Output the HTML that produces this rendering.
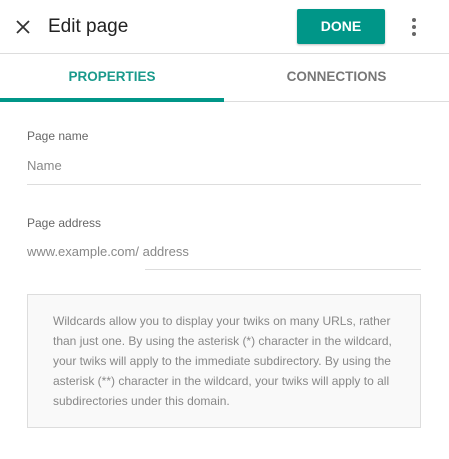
<!DOCTYPE html>
<html><head><style>
body{margin:0;width:449px;height:459px;background:#fff;font-family:"Liberation Sans",sans-serif;position:relative;overflow:hidden}
.a{position:absolute;white-space:nowrap}
</style></head><body>
<svg class="a" style="left:14px;top:18px" width="18" height="18" viewBox="0 0 18 18"><path d="M3 3L15 15M15 3L3 15" stroke="#333" stroke-width="1.8"/></svg>
<div class="a" style="left:48px;top:16px;font-size:19px;color:#222">Edit page</div>
<div class="a" style="left:297px;top:9px;width:88px;height:35px;background:#009688;border-radius:2px;box-shadow:0 1px 2px rgba(0,0,0,.25);color:#fff;font-weight:bold;font-size:14px;line-height:35px;text-align:center">DONE</div>
<div class="a" style="left:412px;top:18px;width:4px;height:4px;border-radius:2px;background:#666"></div>
<div class="a" style="left:412px;top:25px;width:4px;height:4px;border-radius:2px;background:#666"></div>
<div class="a" style="left:412px;top:32px;width:4px;height:4px;border-radius:2px;background:#666"></div>
<div class="a" style="left:0;top:53px;width:449px;height:1px;background:#ddd"></div>
<div class="a" style="left:0;top:69px;width:224px;text-align:center;font-size:13.5px;font-weight:bold;color:#1a9a8c">PROPERTIES</div>
<div class="a" style="left:224px;top:69px;width:225px;text-align:center;font-size:13.5px;font-weight:bold;color:#777">CONNECTIONS</div>
<div class="a" style="left:0;top:101px;width:449px;height:1px;background:#ddd"></div>
<div class="a" style="left:0;top:98px;width:224px;height:4px;background:#009688"></div>
<div class="a" style="left:27px;top:129px;font-size:12px;color:#666">Page name</div>
<div class="a" style="left:27px;top:158px;font-size:13px;color:#888">Name</div>
<div class="a" style="left:27px;top:184px;width:394px;height:1px;background:#ddd"></div>
<div class="a" style="left:27px;top:216px;font-size:12px;color:#666">Page address</div>
<div class="a" style="left:27px;top:244px;font-size:13px;color:#888">www.example.com/ address</div>
<div class="a" style="left:145px;top:269px;width:276px;height:1px;background:#ddd"></div>
<div class="a" style="left:27px;top:294px;width:392px;height:132px;background:#f9f9f9;border:1px solid #ddd"></div>
<div class="a" style="left:53px;top:311px;width:350px;white-space:normal;font-size:12px;line-height:20px;color:#888">Wildcards allow you to display your twiks on many URLs, rather than just one. By using the asterisk (*) character in the wildcard, your twiks will apply to the immediate subdirectory. By using the asterisk (**) character in the wildcard, your twiks will apply to all subdirectories under this domain.</div>
</body></html>
